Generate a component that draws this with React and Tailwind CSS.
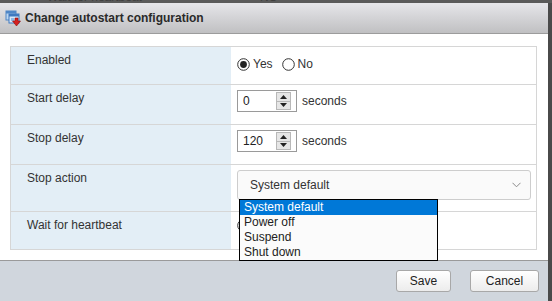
import React from "react";

function Radio({ checked }) {
  return (
    <svg width="13" height="13" viewBox="0 0 13 13" className="shrink-0">
      <circle cx="6.5" cy="6.5" r="5.8" fill="#fff" stroke="#333" strokeWidth="1" />
      {checked && <circle cx="6.5" cy="6.5" r="3.4" fill="#222" />}
    </svg>
  );
}

function Spinner() {
  return (
    <div className="flex flex-col w-[15px] h-[18px] border border-[#b8b8b8] bg-[#e6e6e6]">
      <div className="flex-1 flex items-center justify-center border-b border-[#b8b8b8]">
        <svg width="7" height="4" viewBox="0 0 7 4"><path d="M0 4 L3.5 0 L7 4 Z" fill="#222" /></svg>
      </div>
      <div className="flex-1 flex items-center justify-center">
        <svg width="7" height="4" viewBox="0 0 7 4"><path d="M0 0 L3.5 4 L7 0 Z" fill="#222" /></svg>
      </div>
    </div>
  );
}

function NumInput({ value }) {
  return (
    <div className="flex items-center gap-[5px]">
      <div className="w-[60px] h-[22px] border border-[#9a9a9a] bg-white flex items-center justify-between pl-[5px] pr-[5px]">
        <span className="text-[12px] text-[#222]">{value}</span>
        <Spinner />
      </div>
      <span className="text-[12px] text-[#333]">seconds</span>
    </div>
  );
}

function TitleIcon() {
  return (
    <svg width="17" height="17" viewBox="0 0 17 17">
      <rect x="1" y="1" width="10" height="9" fill="#bcd6f0" stroke="#4f86c6" strokeWidth="1" />
      <rect x="1" y="1" width="10" height="2.5" fill="#4f86c6" />
      <rect x="4" y="4" width="10" height="9" fill="#d8e8f8" stroke="#3f78bf" strokeWidth="1" />
      <rect x="4" y="4" width="10" height="2.5" fill="#3f78bf" />
      <rect x="6" y="8" width="3" height="3" fill="#8fb8e6" />
      <path d="M10 8 H13 V11 H15.5 L11.5 16 L7.5 11 H10 Z" fill="#d42020" stroke="#8a0d0d" strokeWidth="0.6" />
    </svg>
  );
}

export default function App() {
  const rowLabel = "w-[220px] shrink-0 bg-[#e3eef6] pl-[16px] pt-[6px] text-[12px] leading-[14px] text-[#333]";
  return (
    <div
      className="w-[552px] h-[301px] bg-[#4a4a4a] overflow-hidden flex flex-col"
      style={{ fontFamily: '"Liberation Sans", Arial, sans-serif' }}
    >
      <div className="h-[3px] shrink-0 overflow-hidden bg-[#5a5a5a] flex">
        <div className="mt-[-9px] ml-[47px] text-[12px] leading-[12px] text-[#3e3e3e] whitespace-nowrap">Wait for heartbeat</div>
        <div className="mt-[-9px] ml-[118px] text-[12px] leading-[12px] text-[#3e3e3e] whitespace-nowrap">NO</div>
      </div>
      <div className="flex flex-1 min-h-0">
        <div className="w-[548px] flex flex-col bg-white rounded-tr-[2px] relative">
          {/* title bar */}
          <div className="h-[31px] shrink-0 border-b border-[#9c9c9c] bg-gradient-to-b from-[#e6e6ea] to-[#c0c0c2] flex items-center pl-[5px] gap-[3px]">
            <TitleIcon />
            <span className="text-[12px] font-bold text-[#2a2a2a]">Change autostart configuration</span>
          </div>
          {/* body */}
          <div className="h-[226px] shrink-0 bg-white pt-[12px] pl-[10px]">
            <div className="w-[527px] border border-[#d6d6d6] flex flex-col">
              <div className="flex h-[38px] border-b border-[#d6d6d6]">
                <div className={rowLabel}>Enabled</div>
                <div className="flex-1 pl-[6px] pt-[8px] flex items-start text-[12px] text-[#333]">
                  <div className="flex items-center gap-[3px]">
                    <Radio checked />
                    <span>Yes</span>
                  </div>
                  <div className="flex items-center gap-[3px] ml-[9px]">
                    <Radio />
                    <span>No</span>
                  </div>
                </div>
              </div>
              <div className="flex h-[40px] border-b border-[#d6d6d6]">
                <div className={rowLabel}>Start delay</div>
                <div className="flex-1 pl-[6px] pt-[5px]">
                  <NumInput value="0" />
                </div>
              </div>
              <div className="flex h-[40px] border-b border-[#d6d6d6]">
                <div className={rowLabel}>Stop delay</div>
                <div className="flex-1 pl-[6px] pt-[5px]">
                  <NumInput value="120" />
                </div>
              </div>
              <div className="flex h-[47px] border-b border-[#d6d6d6]">
                <div className={rowLabel}>Stop action</div>
                <div className="flex-1 pl-[6px] pt-[5px] relative">
                  <div className="w-[294px] h-[30px] rounded-[3px] border border-[#cdcdcd] bg-[#fafafa] flex items-center justify-between pl-[12px] pr-[9px]">
                    <span className="text-[12px] text-[#333]">System default</span>
                    <svg width="9" height="6" viewBox="0 0 9 6">
                      <path d="M0.5 0.8 L4.5 4.8 L8.5 0.8" fill="none" stroke="#8a8a8a" strokeWidth="1" />
                    </svg>
                  </div>
                  <div className="absolute left-[8px] top-[34px] z-10 w-[199px] border border-black bg-[#fbfbfb] flex flex-col text-[12px] leading-[15px] text-[#222]">
                    <div className="h-[15px] bg-[#0078d7] text-white pl-[4px]">System default</div>
                    <div className="h-[15px] pl-[4px]">Power off</div>
                    <div className="h-[15px] pl-[4px]">Suspend</div>
                    <div className="h-[15px] pl-[4px]">Shut down</div>
                  </div>
                </div>
              </div>
              <div className="flex h-[37px]">
                <div className={rowLabel}>Wait for heartbeat</div>
                <div className="flex-1 pl-[6px] pt-[7px]">
                  <Radio />
                </div>
              </div>
            </div>
          </div>
          {/* footer */}
          <div className="flex-1 border-t border-[#9a9a9a] bg-[#d0d6dd] flex items-start justify-end pt-[9px] pr-[9px] gap-[19px]">
            <button className="w-[55px] h-[22px] rounded-[3px] border border-[#a8a8a8] bg-gradient-to-b from-[#ffffff] to-[#ececec] text-[12px] text-[#222]">Save</button>
            <button className="w-[69px] h-[22px] rounded-[3px] border border-[#a8a8a8] bg-gradient-to-b from-[#ffffff] to-[#ececec] text-[12px] text-[#222]">Cancel</button>
          </div>
        </div>
        <div className="flex-1 bg-[#4a4a4a]" />
      </div>
    </div>
  );
}
